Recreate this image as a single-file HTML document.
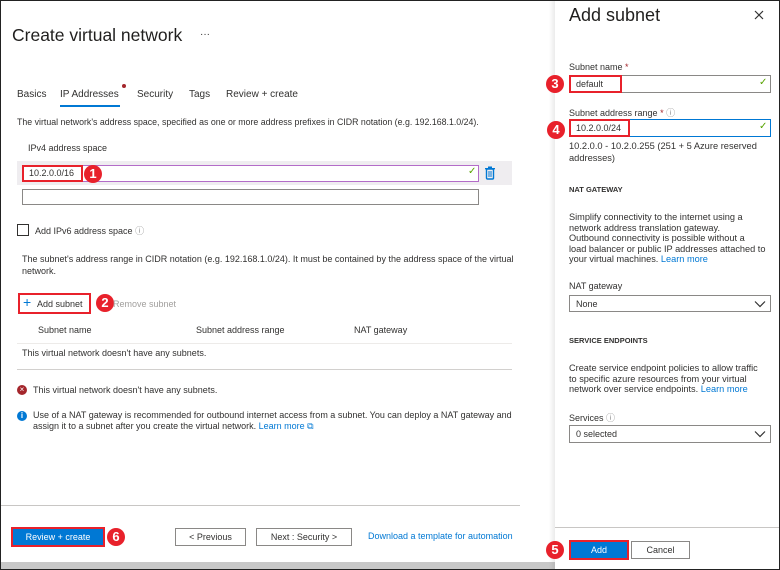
<!DOCTYPE html>
<html><head><style>
*{margin:0;padding:0;box-sizing:border-box}
body{width:780px;height:570px;position:relative;overflow:hidden;background:#fff;font-family:"Liberation Sans",sans-serif;color:#323130;font-size:9px}
.a{position:absolute;white-space:nowrap}
.red{border:2px solid #e8212b}
.c{position:absolute;width:18px;height:18px;border-radius:50%;background:#e8212b;color:#fff;font-size:13px;text-align:center;line-height:18px;font-weight:bold}
.inp{position:absolute;border:1px solid #8a8886;background:#fff}
.btn{position:absolute;border:1px solid #8a8886;background:#fff;text-align:center;font-size:9px;line-height:16px}
.blue{background:#0078d4;color:#fff}
.lnk{color:#0078d4}
.h{font-weight:bold;font-size:7.5px;color:#323130}
.chev{position:absolute;width:12px;height:8px}
</style></head><body>
<div class="a" style="left:0;top:0;width:780px;height:570px;border:1px solid #222;z-index:5;pointer-events:none"></div>
<div class="a" style="left:0;top:562px;width:555px;height:8px;background:#c8c8c8"></div>

<div class="a" style="left:12px;top:25px;font-size:17.5px;color:#201f1e">Create virtual network</div>
<div class="a" style="left:200px;top:29px;font-size:10px">···</div>

<div class="a" style="left:17px;top:89px;font-size:10px">Basics</div>
<div class="a" style="left:60px;top:89px;font-size:10px">IP Addresses</div>
<div class="a" style="left:122px;top:84px;width:4px;height:4px;border-radius:50%;background:#a4262c"></div>
<div class="a" style="left:60px;top:105px;width:60px;height:2px;background:#0078d4"></div>
<div class="a" style="left:137px;top:89px;font-size:10px">Security</div>
<div class="a" style="left:189px;top:89px;font-size:10px">Tags</div>
<div class="a" style="left:226px;top:89px;font-size:10px">Review + create</div>

<div class="a" style="left:17px;top:117px;font-size:8.8px">The virtual network's address space, specified as one or more address prefixes in CIDR notation (e.g. 192.168.1.0/24).</div>
<div class="a" style="left:28px;top:143px">IPv4 address space</div>
<div class="a" style="left:17px;top:161px;width:495px;height:24px;background:#efedf0"></div>
<div class="inp" style="left:22px;top:165px;width:457px;height:17px;border-color:#b36cc8"></div>
<div class="a red" style="left:22px;top:165px;width:61px;height:17px;background:#fff"></div>
<div class="a" style="left:29px;top:168px">10.2.0.0/16</div>
<div class="c" style="left:84px;top:165px">1</div>
<div class="a" style="left:468px;top:166px;color:#57a300;font-size:10px">✓</div>
<svg class="a" style="left:484px;top:166px" width="12" height="14" viewBox="0 0 12 14"><rect x="2.5" y="3" width="7" height="10" rx="1" fill="none" stroke="#0078d4" stroke-width="1.4"/><rect x="1" y="2" width="10" height="1.4" fill="#0078d4"/><rect x="4" y="0.5" width="4" height="1.6" fill="#0078d4"/><path d="M5 5v6M7 5v6" stroke="#0078d4"/></svg>
<div class="inp" style="left:22px;top:189px;width:457px;height:16px"></div>

<div class="a" style="left:17px;top:224px;width:12px;height:12px;border:1px solid #323130"></div>
<div class="a" style="left:35px;top:224px">Add IPv6 address space <span style="color:#888">ⓘ</span></div>
<div class="a" style="left:22px;top:253px;line-height:12px;white-space:normal;width:515px">The subnet's address range in CIDR notation (e.g. 192.168.1.0/24). It must be contained by the address space of the virtual network.</div>

<div class="a red" style="left:18px;top:293px;width:73px;height:21px"></div>
<div class="a" style="left:23px;top:295px;color:#0078d4;font-size:14px;line-height:14px">+</div>
<div class="a" style="left:37px;top:299px">Add subnet</div>
<div class="c" style="left:96px;top:294px">2</div>
<div class="a" style="left:113px;top:299px;color:#a19f9d">Remove subnet</div>

<div class="a" style="left:38px;top:325px">Subnet name</div>
<div class="a" style="left:196px;top:325px">Subnet address range</div>
<div class="a" style="left:354px;top:325px">NAT gateway</div>
<div class="a" style="left:17px;top:343px;width:495px;height:1px;background:#edebe9"></div>
<div class="a" style="left:22px;top:348px">This virtual network doesn't have any subnets.</div>
<div class="a" style="left:17px;top:369px;width:495px;height:1px;background:#d2d0ce"></div>

<div class="a" style="left:17px;top:385px;width:10px;height:10px;border-radius:50%;background:#a4262c;color:#fff;font-size:8px;text-align:center;line-height:10px">×</div>
<div class="a" style="left:33px;top:385px">This virtual network doesn't have any subnets.</div>
<div class="a" style="left:17px;top:411px;width:10px;height:10px;border-radius:50%;background:#0078d4;color:#fff;font-size:8px;text-align:center;line-height:10px;font-weight:bold">i</div>
<div class="a" style="left:33px;top:410px;line-height:11px">Use of a NAT gateway is recommended for outbound internet access from a subnet. You can deploy a NAT gateway and<br>assign it to a subnet after you create the virtual network. <span class="lnk">Learn more ⧉</span></div>

<div class="a" style="left:0;top:505px;width:520px;height:1px;background:#c8c6c4"></div>
<div class="a red blue" style="left:11px;top:527px;width:94px;height:20px;text-align:center;line-height:16px">Review + create</div>
<div class="c" style="left:107px;top:528px">6</div>
<div class="btn" style="left:175px;top:528px;width:71px;height:18px">&lt; Previous</div>
<div class="btn" style="left:256px;top:528px;width:96px;height:18px">Next : Security &gt;</div>
<div class="a lnk" style="left:368px;top:531px">Download a template for automation</div>

<!-- right panel -->
<div class="a" style="left:549px;top:0;width:6px;height:570px;background:linear-gradient(to right,rgba(0,0,0,0),rgba(0,0,0,0.08))"></div>
<div class="a" style="left:555px;top:0;width:225px;height:570px;background:#fff"></div>
<div class="a" style="left:569px;top:5px;font-size:18px;color:#201f1e">Add subnet</div>
<svg class="a" style="left:754px;top:10px" width="10" height="10"><path d="M1 1L9 9M9 1L1 9" stroke="#333" stroke-width="1.2"/></svg>

<div class="a" style="left:569px;top:62px">Subnet name <span style="color:#a4262c">*</span></div>
<div class="inp" style="left:569px;top:75px;width:202px;height:18px"></div>
<div class="a red" style="left:569px;top:75px;width:53px;height:18px"></div>
<div class="a" style="left:576px;top:79px">default</div>
<div class="a" style="left:759px;top:77px;color:#57a300;font-size:10px">✓</div>
<div class="c" style="left:546px;top:75px">3</div>

<div class="a" style="left:569px;top:106px">Subnet address range <span style="color:#a4262c">*</span> <span style="color:#888">ⓘ</span></div>
<div class="inp" style="left:569px;top:119px;width:202px;height:18px;border:1.5px solid #0078d4"></div>
<div class="a red" style="left:569px;top:119px;width:61px;height:18px"></div>
<div class="a" style="left:576px;top:123px">10.2.0.0/24</div>
<div class="a" style="left:759px;top:121px;color:#57a300;font-size:10px">✓</div>
<div class="c" style="left:547px;top:121px">4</div>
<div class="a" style="left:569px;top:140px;line-height:12px;font-size:9.3px">10.2.0.0 - 10.2.0.255 (251 + 5 Azure reserved<br>addresses)</div>

<div class="a h" style="left:569px;top:185px">NAT GATEWAY</div>
<div class="a" style="left:569px;top:212px;line-height:10.6px;font-size:9.2px">Simplify connectivity to the internet using a<br>network address translation gateway.<br>Outbound connectivity is possible without a<br>load balancer or public IP addresses attached to<br>your virtual machines. <span class="lnk">Learn more</span></div>
<div class="a" style="left:569px;top:281px">NAT gateway</div>
<div class="inp" style="left:569px;top:295px;width:202px;height:17px"></div>
<div class="a" style="left:576px;top:299px">None</div>
<svg class="chev" style="left:754px;top:300px"><path d="M1 1.5L6 6.5L11 1.5" fill="none" stroke="#333" stroke-width="1.2"/></svg>

<div class="a h" style="left:569px;top:336px">SERVICE ENDPOINTS</div>
<div class="a" style="left:569px;top:363px;line-height:10.6px;font-size:9.2px">Create service endpoint policies to allow traffic<br>to specific azure resources from your virtual<br>network over service endpoints. <span class="lnk">Learn more</span></div>
<div class="a" style="left:569px;top:411px">Services <span style="color:#888">ⓘ</span></div>
<div class="inp" style="left:569px;top:425px;width:202px;height:18px"></div>
<div class="a" style="left:576px;top:429px">0 selected</div>
<svg class="chev" style="left:754px;top:430px"><path d="M1 1.5L6 6.5L11 1.5" fill="none" stroke="#333" stroke-width="1.2"/></svg>

<div class="a" style="left:555px;top:527px;width:225px;height:1px;background:#c8c6c4"></div>
<div class="a red blue" style="left:569px;top:540px;width:60px;height:20px;text-align:center;line-height:16px">Add</div>
<div class="btn" style="left:631px;top:541px;width:59px;height:18px">Cancel</div>
<div class="c" style="left:546px;top:541px">5</div>
</body></html>
